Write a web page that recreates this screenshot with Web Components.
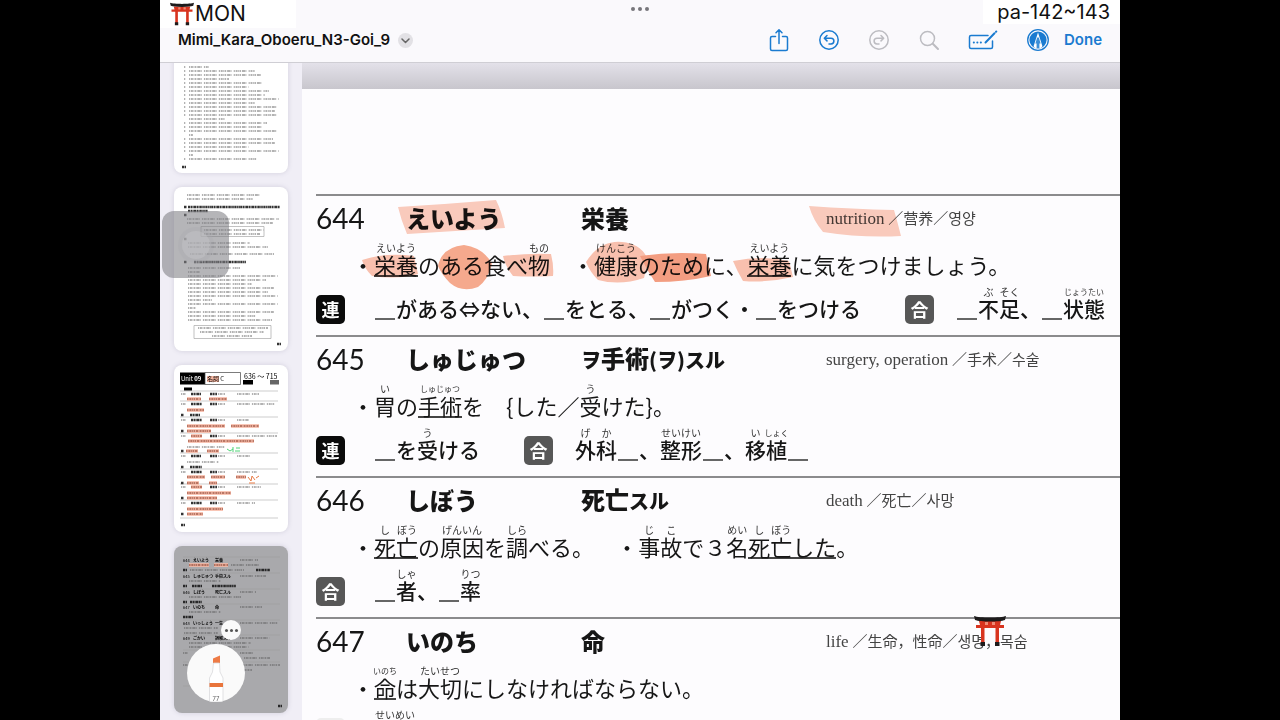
<!DOCTYPE html>
<html lang="ja">
<head>
<meta charset="utf-8">
<title>Mimi_Kara_Oboeru_N3-Goi_9</title>
<style>
html,body{margin:0;height:100%;background:#000;overflow:hidden}
body{font-family:Inter,"Noto Sans CJK JP",sans-serif}
</style>
</head>
<body>
<reader-app></reader-app>
<script>
const JP = '"Noto Sans CJK JP","Noto Sans CJK SC",sans-serif';

function define(name, html, setup) {
  customElements.define(name, class extends HTMLElement {
    constructor() {
      super();
      this.attachShadow({ mode: 'open' }).innerHTML = html.trim();
    }
    connectedCallback() { if (setup) setup(this, this.shadowRoot); }
  });
}

/* Kanji with its reading above; a long reading may hang over its neighbours */
define('furi-gana', `<style>
:host{display:inline-block;line-height:22px;text-align:center}
span{display:block}
.read{margin:0 -6px;font-size:10px;line-height:11px;font-weight:400;color:#333;white-space:nowrap}
:host([tight]) .read{font-size:8px}
</style><span class="read"></span><span><slot></slot></span>`, (el, root) => {
  root.querySelector('.read').textContent = el.getAttribute('read');
});

/* Fill-in line of a collocation */
define('fill-blank', `<style>
:host{display:inline-block;width:22px}
span{display:block;height:2px;margin:0 1px;background:#666;transform:translateY(3px)}
</style><span></span>`);

define('torii-gate', `
<style>:host{display:block;width:24px;height:24px}svg{display:block;width:100%;height:100%}</style>
<svg viewBox="0 0 32 32" aria-hidden="true">
<path fill="#d8341f" d="M5 6h22l-1 4H6zM2 10h28v3H2zM14.500 8h3v4h-3zM7 9h3.500v19H7zM21.500 9H25v19h-3.500z"/>
<path fill="#f08a74" d="M11 7h3v3h-3zM18 7h3v3h-3z"/>
<path fill="#1d1b1c" d="M0 1c5 2 27 2 32 0l-1 4c-5 2-25 2-30 0zM6.500 27H11v4H6.500zM21 27h4.500v4H21z"/>
</svg>`);

define('corner-tag', `
<style>
:host{display:flex;align-items:center;background:#fff;color:#111;font-size:20px;line-height:24px}
::slotted(torii-gate){margin-right:1px}
</style><slot></slot>`);

define('icon-button', `
<style>
:host{display:block;color:#1a7bd0}
:host([dim]){color:#bcbcc1}
button{display:flex;border:0;padding:0;background:none;color:inherit}
</style>
<button type="button"><slot></slot></button>`, (el, root) => {
  root.querySelector('button').setAttribute('aria-label', el.getAttribute('label'));
});

define('top-bar', `
<style>
:host{display:flex;flex-direction:column;position:relative;height:62px;background:#faf9fc;border-bottom:1px solid #cfced4;z-index:2}
.dots{height:18px;display:flex;justify-content:center;align-items:center;gap:3px}
.dots i{width:4px;height:4px;border-radius:50%;background:#77777b}
.row{display:flex;justify-content:space-between;align-items:center;height:44px;padding:0 18px}
.name{display:flex;align-items:center;gap:8px}
h1{margin:0;font-size:15px;font-weight:600;line-height:20px;color:#111}
.name button{width:15px;height:15px;border:0;border-radius:50%;padding:0;background:#e2e1e5;display:flex;align-items:center;justify-content:center}
nav{display:flex;align-items:center;gap:28px}
svg{display:block;fill:none;stroke:currentColor;stroke-width:1.500;stroke-linecap:round;stroke-linejoin:round}
.done{border:0;background:none;padding:0;margin-left:-14px;font:600 15px/20px Inter,sans-serif;color:#1a7bd0}
.left,.right{position:absolute;top:0}
.left{left:0;height:28px;padding:0 50px 0 10px;font-size:21px}
.right{right:0;height:24px;padding:0 10px 0 14px}
</style>
<div class="dots"><i></i><i></i><i></i></div>
<div class="row">
 <div class="name"><h1>Mimi_Kara_Oboeru_N3-Goi_9</h1>
  <button type="button" aria-label="Document menu"><svg width="9" height="9" viewBox="0 0 9 9" style="color:#666"><path d="M1 3l3.500 3.500L8 3"/></svg></button></div>
 <nav>
  <icon-button label="Share"><svg width="22" height="24" viewBox="0 0 22 24"><path d="M7.500 8.500H4a1.500 1.500 0 0 0-1.500 1.500v11A1.500 1.500 0 0 0 4 22.500h14a1.500 1.500 0 0 0 1.500-1.500V10A1.500 1.500 0 0 0 18 8.500h-3.500M11 15.500V2M8 4.800L11 1.800l3 3"/></svg></icon-button>
  <icon-button label="Undo"><svg width="22" height="22" viewBox="0 0 22 22"><circle cx="11" cy="11" r="9.200"/><path d="M9 6.500L6.300 9.200 9 11.900M6.500 9.200H13a2.900 2.900 0 0 1 0 5.800h-2"/></svg></icon-button>
  <icon-button label="Redo" dim><svg width="22" height="22" viewBox="0 0 22 22"><circle cx="11" cy="11" r="9.200"/><path d="M13 6.500l2.700 2.700-2.700 2.700M15.500 9.200H9a2.900 2.900 0 0 0 0 5.800h2"/></svg></icon-button>
  <icon-button label="Search" dim><svg width="22" height="22" viewBox="0 0 22 22"><circle cx="9.500" cy="9.500" r="7"/><path d="M14.800 14.800L20 20" stroke-width="2"/></svg></icon-button>
  <icon-button label="Fill form"><svg width="30" height="22" viewBox="0 0 30 22"><path d="M20 6.500H3A1.500 1.500 0 0 0 1.500 8v10A1.500 1.500 0 0 0 3 19.500h20a1.500 1.500 0 0 0 1.500-1.500v-6"/><path stroke-width="2" d="M17.500 13.500l9-9.200M28 2.800l.3-.3M5.800 13.500h.1M9.300 13.500h.1M12.800 13.500h.1"/></svg></icon-button>
  <icon-button label="Markup"><svg width="24" height="24" viewBox="0 0 24 24"><circle cx="12" cy="12" r="10.300" stroke-width="1.300"/><circle cx="12" cy="12" r="8.600" fill="currentColor" stroke="none"/><path d="M12 4.500L7.800 17.500v1.700q4 2.400 8.400 0v-1.700z" fill="#fff" stroke="none"/><path d="M11.200 9.500L9.400 15.500h1.200v4.800h2.800v-4.800h1.200l-1.800-6z" fill="currentColor" stroke="none" opacity=".85"/></svg></icon-button>
  <button class="done" type="button">Done</button>
 </nav>
</div>
<corner-tag class="left"><torii-gate></torii-gate>MON</corner-tag>
<corner-tag class="right">pa-142~143</corner-tag>`);

/* Thumbnail sheet: rows are [x, y, width, kind]; kind: t text, b bold, g rule, r marked text */
define('page-thumb', `
<style>
:host{display:block;flex:none;width:114px;border-radius:8px;background:#fff;overflow:hidden;box-shadow:0 0 5px rgba(90,85,120,.2)}
:host([current]){background:#a9a9ac}
svg{display:block;width:114px}
text{font-family:${JP}}
</style><svg></svg>`, (el, root) => {
  const { h, rows, extra } = SHEETS[el.getAttribute('sheet')];
  const svg = root.querySelector('svg');
  svg.setAttribute('viewBox', '0 0 114 ' + h);
  svg.setAttribute('height', h);
  const look = {
    t: 'stroke="#555" stroke-width="1.700" stroke-dasharray="1.200 .7 2 .6 .8 .5 1.600 .9 3 .4 1 2.200" opacity=".6"',
    b: 'stroke="#111" stroke-width="2.400" stroke-dasharray="2.200 .5 1.500 .4 .9 .3" opacity=".85"',
    g: 'stroke="#999" stroke-width=".5"',
    r: 'stroke="#8a3a26" stroke-width="1.700" stroke-dasharray="1.600 .7 2.200 .6 .9 .5" opacity=".75"',
    h: 'stroke="#f8b9a4" stroke-width="4" opacity=".8"'
  };
  svg.innerHTML = rows.map(([x, y, w, k]) =>
    (k === 'r' ? `<path d="M${x} ${y}h${w}" ${look.h}/>` : '') +
    `<path d="M${x} ${y}h${w}" ${look[k]}/>`).join('') + extra;
});

const SHEETS = {};
{
  const w1 = [20,66,72,40,74,60,80,76,90,66,88,86,88,36,78,74,88,4,84,86,60,90,4,68];
  SHEETS.a = { h: 164, rows: w1.map((w, i) => [15, 58 + i * 4, w, 't']).concat(
    w1.map((w, i) => [10, 58 + i * 4, [13,17,22].includes(i) ? 0 : 2, 't']), [[8, 158, 4, 'b']]), extra: '' };

  const w2 = [[13,8,74,'t'],[13,12,66,'t'],[10,20,3,'b'],[14,20,92,'b'],[14,24,20,'b'],[10,28,3,'b'],[13,32,92,'t'],[13,36,86,'t'],
    [30,43,60,'t'],[30,47,56,'t'],[10,52,3,'b'],[14,56,62,'t'],[14,60,80,'t'],[16,67,84,'t'],[10,75,3,'b'],[20,75,52,'b']];
  [[14,52],[14,12],[14,90],[14,78],[14,64],[14,86],[14,80],[14,90],[14,24],[14,90],[14,8],[14,86],[14,68],[14,84]].forEach(([x, w], i) => w2.push([x, 81 + i * 4, w, 't']));
  w2.push([24,141,70,'t'],[26,145,64,'t'],[38,149,40,'t'],[103,157,4,'b']);
  SHEETS.b = { h: 164, rows: w2, extra: '<path fill="none" stroke="#999" stroke-width=".6" d="M27 39.500h63v10H27zM20 138.500h77v13H20z"/>' };

  const c = [];
  [29,39,55,71,91,107,122,138].forEach((y, i) => {
    c.push([6, y - 3, 98, 'g'], [7, y, 5, 't'], i % 4 === 0 ? [17, y, 10, 'b'] : [17, y, 11, i % 3 ? 'b' : 'r'], [36, y, 7, 'b'], [44, y, 7, 't'],
      [63, y, [22, 38, 12, 40, 14, 20, 24, 18][i], 't']);
  });
  c.push([13,34,14,'r'],[35,34,18,'r'],[13,45,17,'r'],[16,50,10,'b'],[13,61,38,'r'],[57,61,28,'r'],[13,66,24,'r'],[14,76,66,'r'],
    [13,82,38,'t'],[12,86,12,'r'],[33,86,12,'r'],[13,97,32,'t'],[16,102,12,'b'],[13,112,18,'r'],[37,112,14,'r'],[62,112,10,'r'],
    [13,118,12,'r'],[35,118,8,'r'],[13,128,44,'r'],[13,133,30,'r'],[13,144,36,'r'],[13,149,16,'r'],[6,153,98,'g'],[7,160,4,'b']);
  [50,66,86,102,118,133,149].forEach(y => c.push([7, y, 3, 'b']));
  SHEETS.c = { h: 167, rows: c, extra: `
    <path d="M6 7.500h25v12H6z"/><path fill="none" stroke="#444" stroke-width=".7" d="M31 7.500h35.500v12H31z"/>
    <text x="7" y="16" font-size="6" fill="#fff">Unit <tspan font-weight="700">09</tspan></text>
    <path d="M33 14h12" stroke="#f6b7a2" stroke-width="6"/><text x="33" y="16" font-size="6">名詞 C</text>
    <text x="70" y="14" font-size="7">636 ～ 715</text>
    <path d="M69 15h10v4.500H69zM10 22.500h8v3h-8z"/><path fill="#666" d="M96 15h9v4.500h-9z"/>
    <path d="M53 84l3 2 3-2M59 82v5M62 83h4M61 86h5" fill="none" stroke="#4fd477"/>
    <path d="M74 112l3 4 1-5 3 4M75 118h6M82 113l3-2" fill="none" stroke="#e77a45"/>` };

  const d = [], words = [['えいよう','栄養'],['しゅじゅつ','手術スル'],['しぼう','死亡スル'],['いのち','命'],['いっしょう','一生'],['ごかい','誤解スル'],['',''],['','']];
  const ys = [14, 30, 46, 61, 77, 92, 107, 119];
  ys.forEach((y, i) => {
    d.push([9, y - 3, 97, 'g'], [66, y, [18, 26, 16, 22, 38, 30, 14, 40][i], 't']);
    if (i > 5) d.push([9, y, 5, 't']);
  });
  d.push([15,19,20,'r'],[40,19,14,'r'],[57,19,28,'t'],[16,24,54,'t'],[82,24,14,'b'],[15,35,32,'t'],[18,40,10,'b'],[38,40,24,'b'],
    [15,51,52,'t'],[16,56,12,'b'],[15,66,32,'t'],[9,71,10,'b'],[10,82,34,'t'],[10,87,34,'t'],[15,97,62,'t'],[15,101,60,'t'],[70,112,26,'t'],[68,124,10,'t'],[9,140,60,'g'],[104,160,4,'b']);
  [24,40,56].forEach(y => d.push([9, y, 4, 'b']));
  SHEETS.d = { h: 167, rows: d, extra: words.map(([a, b], i) => a ?
    `<text x="9" y="${ys[i] + 2}" font-size="4">${644 + i}</text><text x="19" y="${ys[i] + 2}" font-size="4" font-weight="700">${a}</text><text x="41" y="${ys[i] + 2}" font-size="4" font-weight="700">${b}</text>` : '').join('') };
}

define('thumb-rail', `
<style>
:host{position:relative;display:flex;flex-direction:column;justify-content:flex-end;align-items:center;gap:14px;flex:none;width:142px;box-sizing:border-box;padding-bottom:7px;background:#f0eef6;overflow:hidden}
.touch{position:absolute;left:2px;bottom:442px;width:67px;height:67px;border-radius:12px;background:rgba(128,127,132,.58);display:flex;align-items:center;justify-content:center}
.touch i{width:28px;height:28px;border-radius:50%;background:rgba(190,190,194,.6);box-shadow:0 0 0 4px rgba(170,170,174,.3)}
button{position:absolute;border:0;padding:0;border-radius:50%;background:#fafafa;display:flex;justify-content:center;overflow:hidden}
.pen{left:27px;bottom:18px;width:58px;height:58px}
.more{left:61px;bottom:80px;width:20px;height:20px;gap:2px;align-items:center}
.more i{width:3px;height:3px;border-radius:50%;background:#555}
</style>
<page-thumb sheet="a"></page-thumb><page-thumb sheet="b"></page-thumb><page-thumb sheet="c"></page-thumb><page-thumb sheet="d" current></page-thumb>
<div class="touch"><i></i></div>
<button class="pen" type="button" aria-label="Highlighter"><svg width="58" height="58" viewBox="0 0 58 58">
<path d="M26 14.500l7-3v7.500h-7z" fill="#ee7b45"/><path d="M26.500 19h6l.5 9 3 6v24H22.500V34l3-6z" fill="#fff" stroke="#d9d9dc" stroke-width=".8"/><path d="M22.500 39H36v4H22.500z" fill="#e9753c"/>
<text x="29" y="57" text-anchor="middle" font-family="Inter" font-size="6" fill="#666">77</text></svg></button>
<button class="more" type="button" aria-label="More"><i></i><i></i><i></i></button>`);

define('kind-badge', `
<style>
:host{display:flex;flex:none;align-items:center;justify-content:center;width:29px;height:29px;border-radius:5px;background:#0b0b0b;color:#fff;font:700 18px/29px ${JP}}
:host([gray]){background:#575757}
:host([pale]){background:#eee}
</style><slot></slot>`);

define('vocab-entry', `
<style>
:host{display:block;position:relative;border-top:2px solid #8b8b8d;height:139px;font-family:${JP};color:#161616;text-spacing-trim:space-all}
header{display:grid;grid-template-columns:90px 175px 245px 1fr;align-items:center;height:44px}
.num{font:400 28px/34px Lato,sans-serif}
h2,.kanji{margin:0;font-size:24px;line-height:34px;font-weight:900}
.gloss{padding-top:2px;font:15px/24px "Liberation Serif","Noto Sans CJK SC","Noto Sans CJK KR",serif;color:#444}
.line,.use{display:flex;align-items:flex-end;box-sizing:border-box;white-space:nowrap}
.line{height:41px;padding-left:36px;font-size:22px;line-height:34px}
.use{height:51px;padding-bottom:8px;font-size:21px;line-height:32px;font-weight:500}
</style>
<header><span class="num"></span><h2></h2><span class="kanji"><slot name="kanji"></slot></span><span class="gloss"><slot name="gloss"></slot></span></header>
<div class="line"><slot name="line"></slot></div>
<div class="use"><slot name="use"></slot></div>
<slot name="marks"></slot>`, (el, root) => {
  root.querySelector('.num').textContent = el.getAttribute('number');
  root.querySelector('h2').textContent = el.getAttribute('kana');
});

define('doc-page', `
<style>
:host{display:block;position:relative;flex:1;min-width:0;background:#fdfcfe;overflow:hidden}
.edge{height:26px;background:linear-gradient(#e3e1e9,#c8c6cd)}
.list{padding:105px 0 0 14px}
small{font-size:20px}
[slot=gloss] b{font-weight:400;font-size:17px}
u{display:inline-block;text-decoration:none;line-height:22px;border-bottom:2px solid #444}
.set{display:flex;align-items:flex-end}
.set span{padding:0 44px 0 29px}
.set+.set span{padding:0 0 0 22px}
.marks{position:absolute;left:0;top:0;mix-blend-mode:multiply;pointer-events:none}
.stamp{position:absolute;left:672px;top:552px;width:32px;height:32px}
</style>
<div class="edge"></div>
<div class="list">
<vocab-entry number="644" kana="えいよう">
 <span slot="kanji">栄養</span>
 <span slot="gloss"><b>nutrition</b> ／营养／영양</span>
 <span slot="line">・<u><furi-gana read="えいよう">栄養</furi-gana></u>のある食べ<furi-gana read="もの">物</furi-gana>　・<furi-gana read="けんこう">健康</furi-gana>のために、<u><furi-gana read="えいよう">栄養</furi-gana></u>に気をつけましょう。</span>
 <div slot="use" class="set"><kind-badge>連</kind-badge><span><fill-blank></fill-blank>がある⇔ない、<fill-blank></fill-blank>をとる、<fill-blank></fill-blank>がつく・<fill-blank></fill-blank>をつける</span></div>
 <div slot="use" class="set"><kind-badge gray>合</kind-badge><span><fill-blank></fill-blank><furi-gana read="ぶ">不</furi-gana><furi-gana read="そく">足</furi-gana>、<fill-blank></fill-blank><furi-gana tight read="じょうたい">状態</furi-gana></span></div>
 <svg slot="marks" class="marks" width="804" height="139" viewBox="0 0 804 139" aria-hidden="true">
  <g fill="#fbcdbd"><path d="M82 11q50-3 98-7 6 12 9 28-50 3-98 6-6-14-9-27z"/><path d="M493 10q44 3 85 4 4 14 7 26-40 2-78-4-10-12-14-26z"/></g>
  <g fill="#fac3af"><path d="M46 64q24-8 52-4l4 18q-20 6-46 2-8-8-10-16zM187 60q26-3 48-2 3 12 2 22-22 1-40 0-8-10-10-20z"/><path d="M270 66q14-22 36-20 20 2 26 18l-4 18q-24 8-46 2-8-8-12-18z"/><path d="M417 65q30-6 56 0l4 16q-26 6-50 4-6-10-10-20z"/></g>
  <path fill="#f7ab8e" d="M122 70q4-19 26-21 20 3 28 19-4 16-14 23-16 6-28-4-8-8-12-17z"/>
  <path fill="#f59f82" d="M324 60q34-5 66-2l5 22q-26 6-56 6-8-12-15-26z"/>
 </svg>
</vocab-entry>
<vocab-entry number="645" kana="しゅじゅつ">
 <span slot="kanji"><small>ヲ</small>手術<small>(ヲ)スル</small></span>
 <span slot="gloss"><b>surgery, operation</b> ／手术／수술</span>
 <span slot="line">・<furi-gana read="い">胃</furi-gana>の<u><furi-gana tight read="しゅじゅつ">手術</furi-gana></u>を　{した／<furi-gana read="う">受</furi-gana>けた}。</span>
 <div slot="use" class="set"><kind-badge>連</kind-badge><span><fill-blank></fill-blank>を<furi-gana read="う">受</furi-gana>ける</span></div>
 <div slot="use" class="set"><kind-badge gray>合</kind-badge><span><furi-gana read="げ">外</furi-gana><furi-gana read="か">科</furi-gana><fill-blank></fill-blank>、<furi-gana read="せいけい">整形</furi-gana><fill-blank></fill-blank>、<furi-gana read="い">移</furi-gana><furi-gana tight read="しょく">植</furi-gana><fill-blank></fill-blank></span></div>
</vocab-entry>
<vocab-entry number="646" kana="しぼう">
 <span slot="kanji">死亡<small>スル</small></span>
 <span slot="gloss"><b>death</b> ／死亡／사망</span>
 <span slot="line">・<u><furi-gana read="し">死</furi-gana><furi-gana read="ぼう">亡</furi-gana></u>の<furi-gana read="げんいん">原因</furi-gana>を<furi-gana read="しら">調</furi-gana>べる。　・<furi-gana read="じ">事</furi-gana><furi-gana read="こ">故</furi-gana>で３<furi-gana read="めい">名</furi-gana><u><furi-gana read="し">死</furi-gana><furi-gana read="ぼう">亡</furi-gana>した</u>。</span>
 <div slot="use" class="set"><kind-badge gray>合</kind-badge><span><fill-blank></fill-blank><furi-gana read="しゃ">者</furi-gana>、<fill-blank></fill-blank><furi-gana read="りつ">率</furi-gana></span></div>
</vocab-entry>
<vocab-entry number="647" kana="いのち">
 <span slot="kanji">命</span>
 <span slot="gloss"><b>life</b> ／生命，性命／생명，목숨</span>
 <span slot="line">・<u><furi-gana tight read="いのち">命</furi-gana></u>は<furi-gana read="たいせつ">大切</furi-gana>にしなければならない。</span>
 <div slot="use" class="set"><kind-badge pale></kind-badge><span><furi-gana read="せいめい">生命</furi-gana></span></div>
</vocab-entry>
</div>
<torii-gate class="stamp"></torii-gate>`);

define('reader-app', `
<style>
:host{display:flex;flex-direction:column;height:100vh;margin:0 12.5%;overflow:hidden;background:#fdfcfe}
main{display:flex;flex:1;min-height:0}
</style>
<top-bar></top-bar>
<main><thumb-rail></thumb-rail><doc-page></doc-page></main>`);
</script>
</body>
</html>
